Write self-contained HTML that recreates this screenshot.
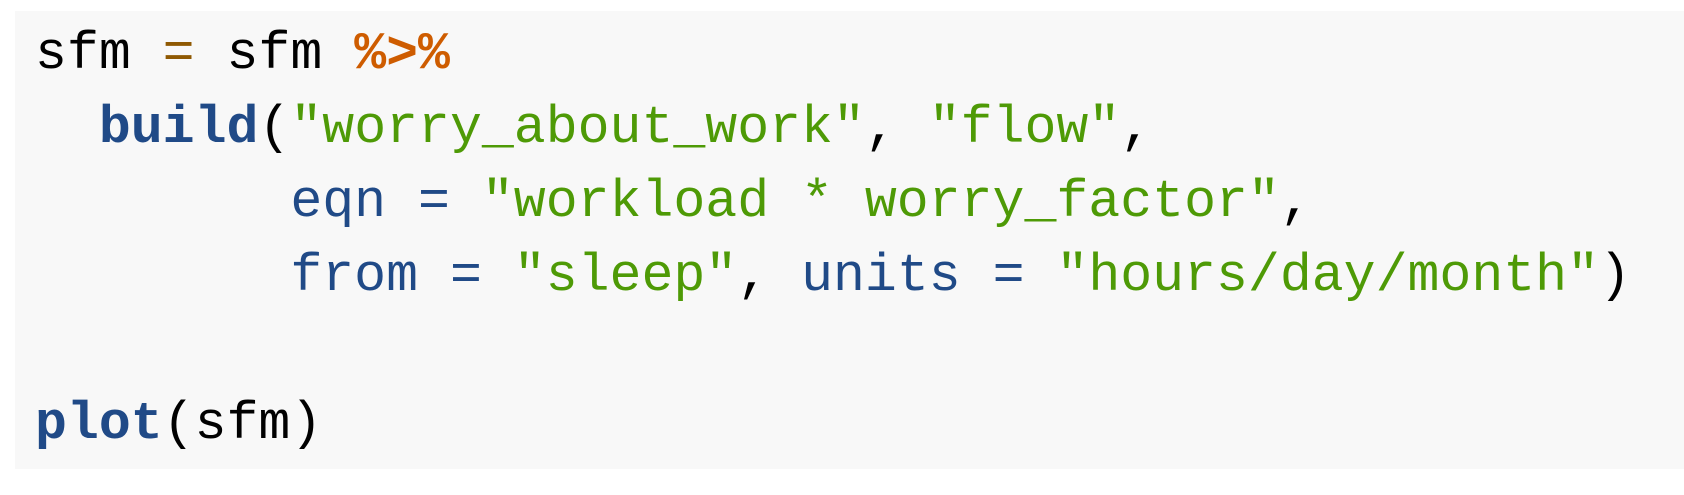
<!DOCTYPE html>
<html><head><style>
html,body{margin:0;padding:0;background:#fff;width:1684px;height:495px;overflow:hidden}
.box{position:absolute;left:15px;top:11px;width:1669px;height:458px;background:#f8f8f8}
pre{position:absolute;left:35px;top:17px;margin:0;font-family:"Liberation Mono",monospace;font-size:53.2px;line-height:74px;color:#000}
.k{color:#204a87;font-weight:bold}
.f{color:#204a87}
.s{color:#4e9a06}
.o{color:#ce5c00;font-weight:bold}
.e{color:#8f5902}
</style></head><body>
<div class="box"></div>
<pre>sfm <span class="e">=</span> sfm <span class="o">%&gt;%</span>
  <span class="k">build</span>(<span class="s">"worry_about_work"</span>, <span class="s">"flow"</span>,
        <span class="f">eqn</span> <span class="f">=</span> <span class="s">"workload * worry_factor"</span>,
        <span class="f">from</span> <span class="f">=</span> <span class="s">"sleep"</span>, <span class="f">units</span> <span class="f">=</span> <span class="s">"hours/day/month"</span>)

<span class="k">plot</span>(sfm)</pre>
</body></html>
